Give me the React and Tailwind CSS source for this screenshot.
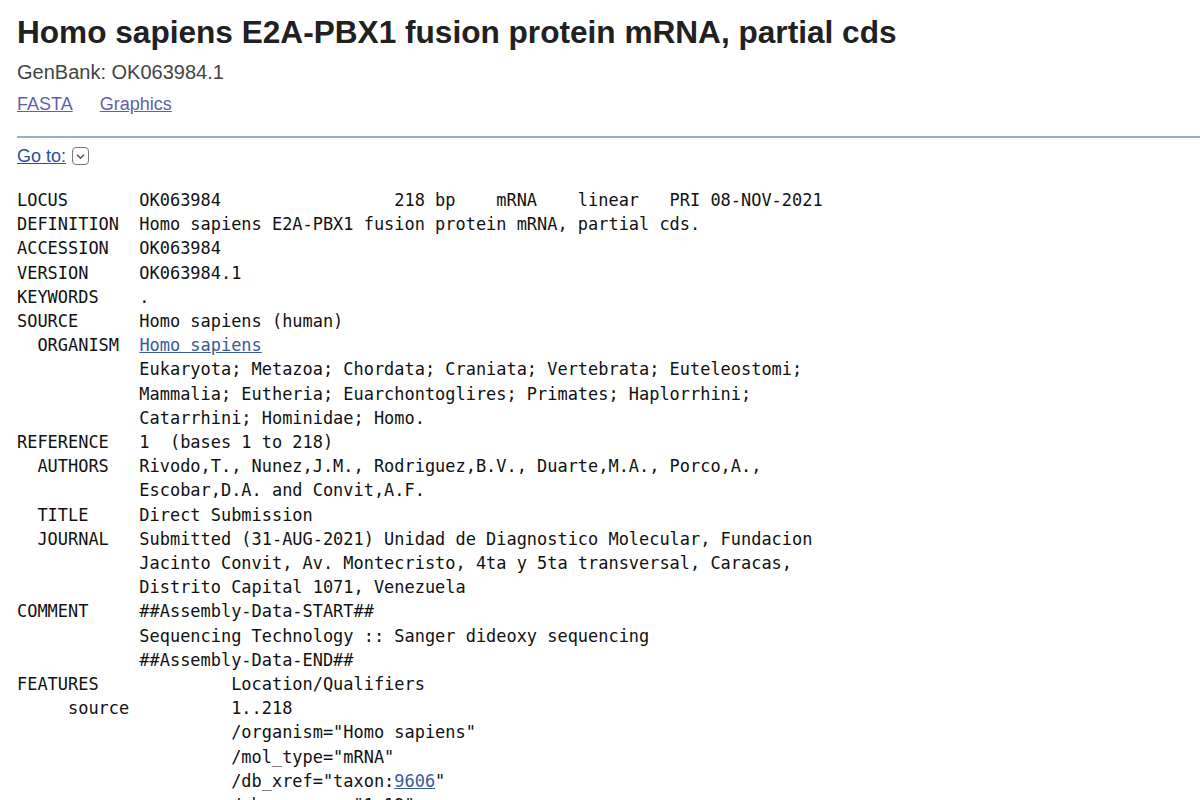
import React from "react";

const flatFile = [
  "LOCUS       OK063984                 218 bp    mRNA    linear   PRI 08-NOV-2021",
  "DEFINITION  Homo sapiens E2A-PBX1 fusion protein mRNA, partial cds.",
  "ACCESSION   OK063984",
  "VERSION     OK063984.1",
  "KEYWORDS    .",
  "SOURCE      Homo sapiens (human)",
];

const flatFile2 = [
  "            Eukaryota; Metazoa; Chordata; Craniata; Vertebrata; Euteleostomi;",
  "            Mammalia; Eutheria; Euarchontoglires; Primates; Haplorrhini;",
  "            Catarrhini; Hominidae; Homo.",
  "REFERENCE   1  (bases 1 to 218)",
  "  AUTHORS   Rivodo,T., Nunez,J.M., Rodriguez,B.V., Duarte,M.A., Porco,A.,",
  "            Escobar,D.A. and Convit,A.F.",
  "  TITLE     Direct Submission",
  "  JOURNAL   Submitted (31-AUG-2021) Unidad de Diagnostico Molecular, Fundacion",
  "            Jacinto Convit, Av. Montecristo, 4ta y 5ta transversal, Caracas,",
  "            Distrito Capital 1071, Venezuela",
  "COMMENT     ##Assembly-Data-START##",
  "            Sequencing Technology :: Sanger dideoxy sequencing",
  "            ##Assembly-Data-END##",
  "FEATURES             Location/Qualifiers",
  "     source          1..218",
  '                     /organism="Homo sapiens"',
  '                     /mol_type="mRNA"',
];

function GoToIcon() {
  return (
    <span className="inline-flex items-center justify-center w-[17px] h-[18px] ml-[6px] border-[1.5px] border-[#7a7a7a] rounded-[4px]">
      <svg width="11" height="11" viewBox="0 0 11 11" fill="none">
        <path d="M2 3.8 L5.5 7.3 L9 3.8" stroke="#555" strokeWidth="1.5" />
      </svg>
    </span>
  );
}

export default function App() {
  return (
    <div className="bg-white min-h-[800px] pl-[17px] overflow-hidden font-['Liberation_Sans',Arial,sans-serif]">
      <h1 className="pt-[13px] text-[31.6px] leading-[38px] font-bold text-[#212121] whitespace-nowrap">
        Homo sapiens E2A-PBX1 fusion protein mRNA, partial cds
      </h1>
      <div className="mt-[9px] text-[20px] leading-[24px] text-[#444]">
        GenBank: OK063984.1
      </div>
      <div className="mt-[8px] flex gap-[27px] text-[18px] leading-[24px]">
        <a href="#" className="underline text-[#5f5fb0]">FASTA</a>
        <a href="#" className="underline text-[#5f5fb0]">Graphics</a>
      </div>
      <div className="mt-[20px] h-[2px] bg-[#97b1c8]" />
      <div className="mt-[6px] text-[18px] leading-[24px] flex items-center">
        <a href="#" className="underline text-[#2d4d9e]">Go to:</a>
        <GoToIcon />
      </div>
      <pre className="mt-[20px] font-['DejaVu_Sans_Mono',monospace] text-[16.95px] leading-[24.2px] text-[#111]">
        {flatFile.join("\n")}
        {"\n  ORGANISM  "}
        <a href="#" className="underline text-[#3a5a9a]">Homo sapiens</a>
        {"\n"}
        {flatFile2.join("\n")}
        {'\n                     /db_xref="taxon:'}
        <a href="#" className="underline text-[#3a5a9a]">9606</a>
        {'"\n                     /chromosome="1;19"'}
      </pre>
    </div>
  );
}
